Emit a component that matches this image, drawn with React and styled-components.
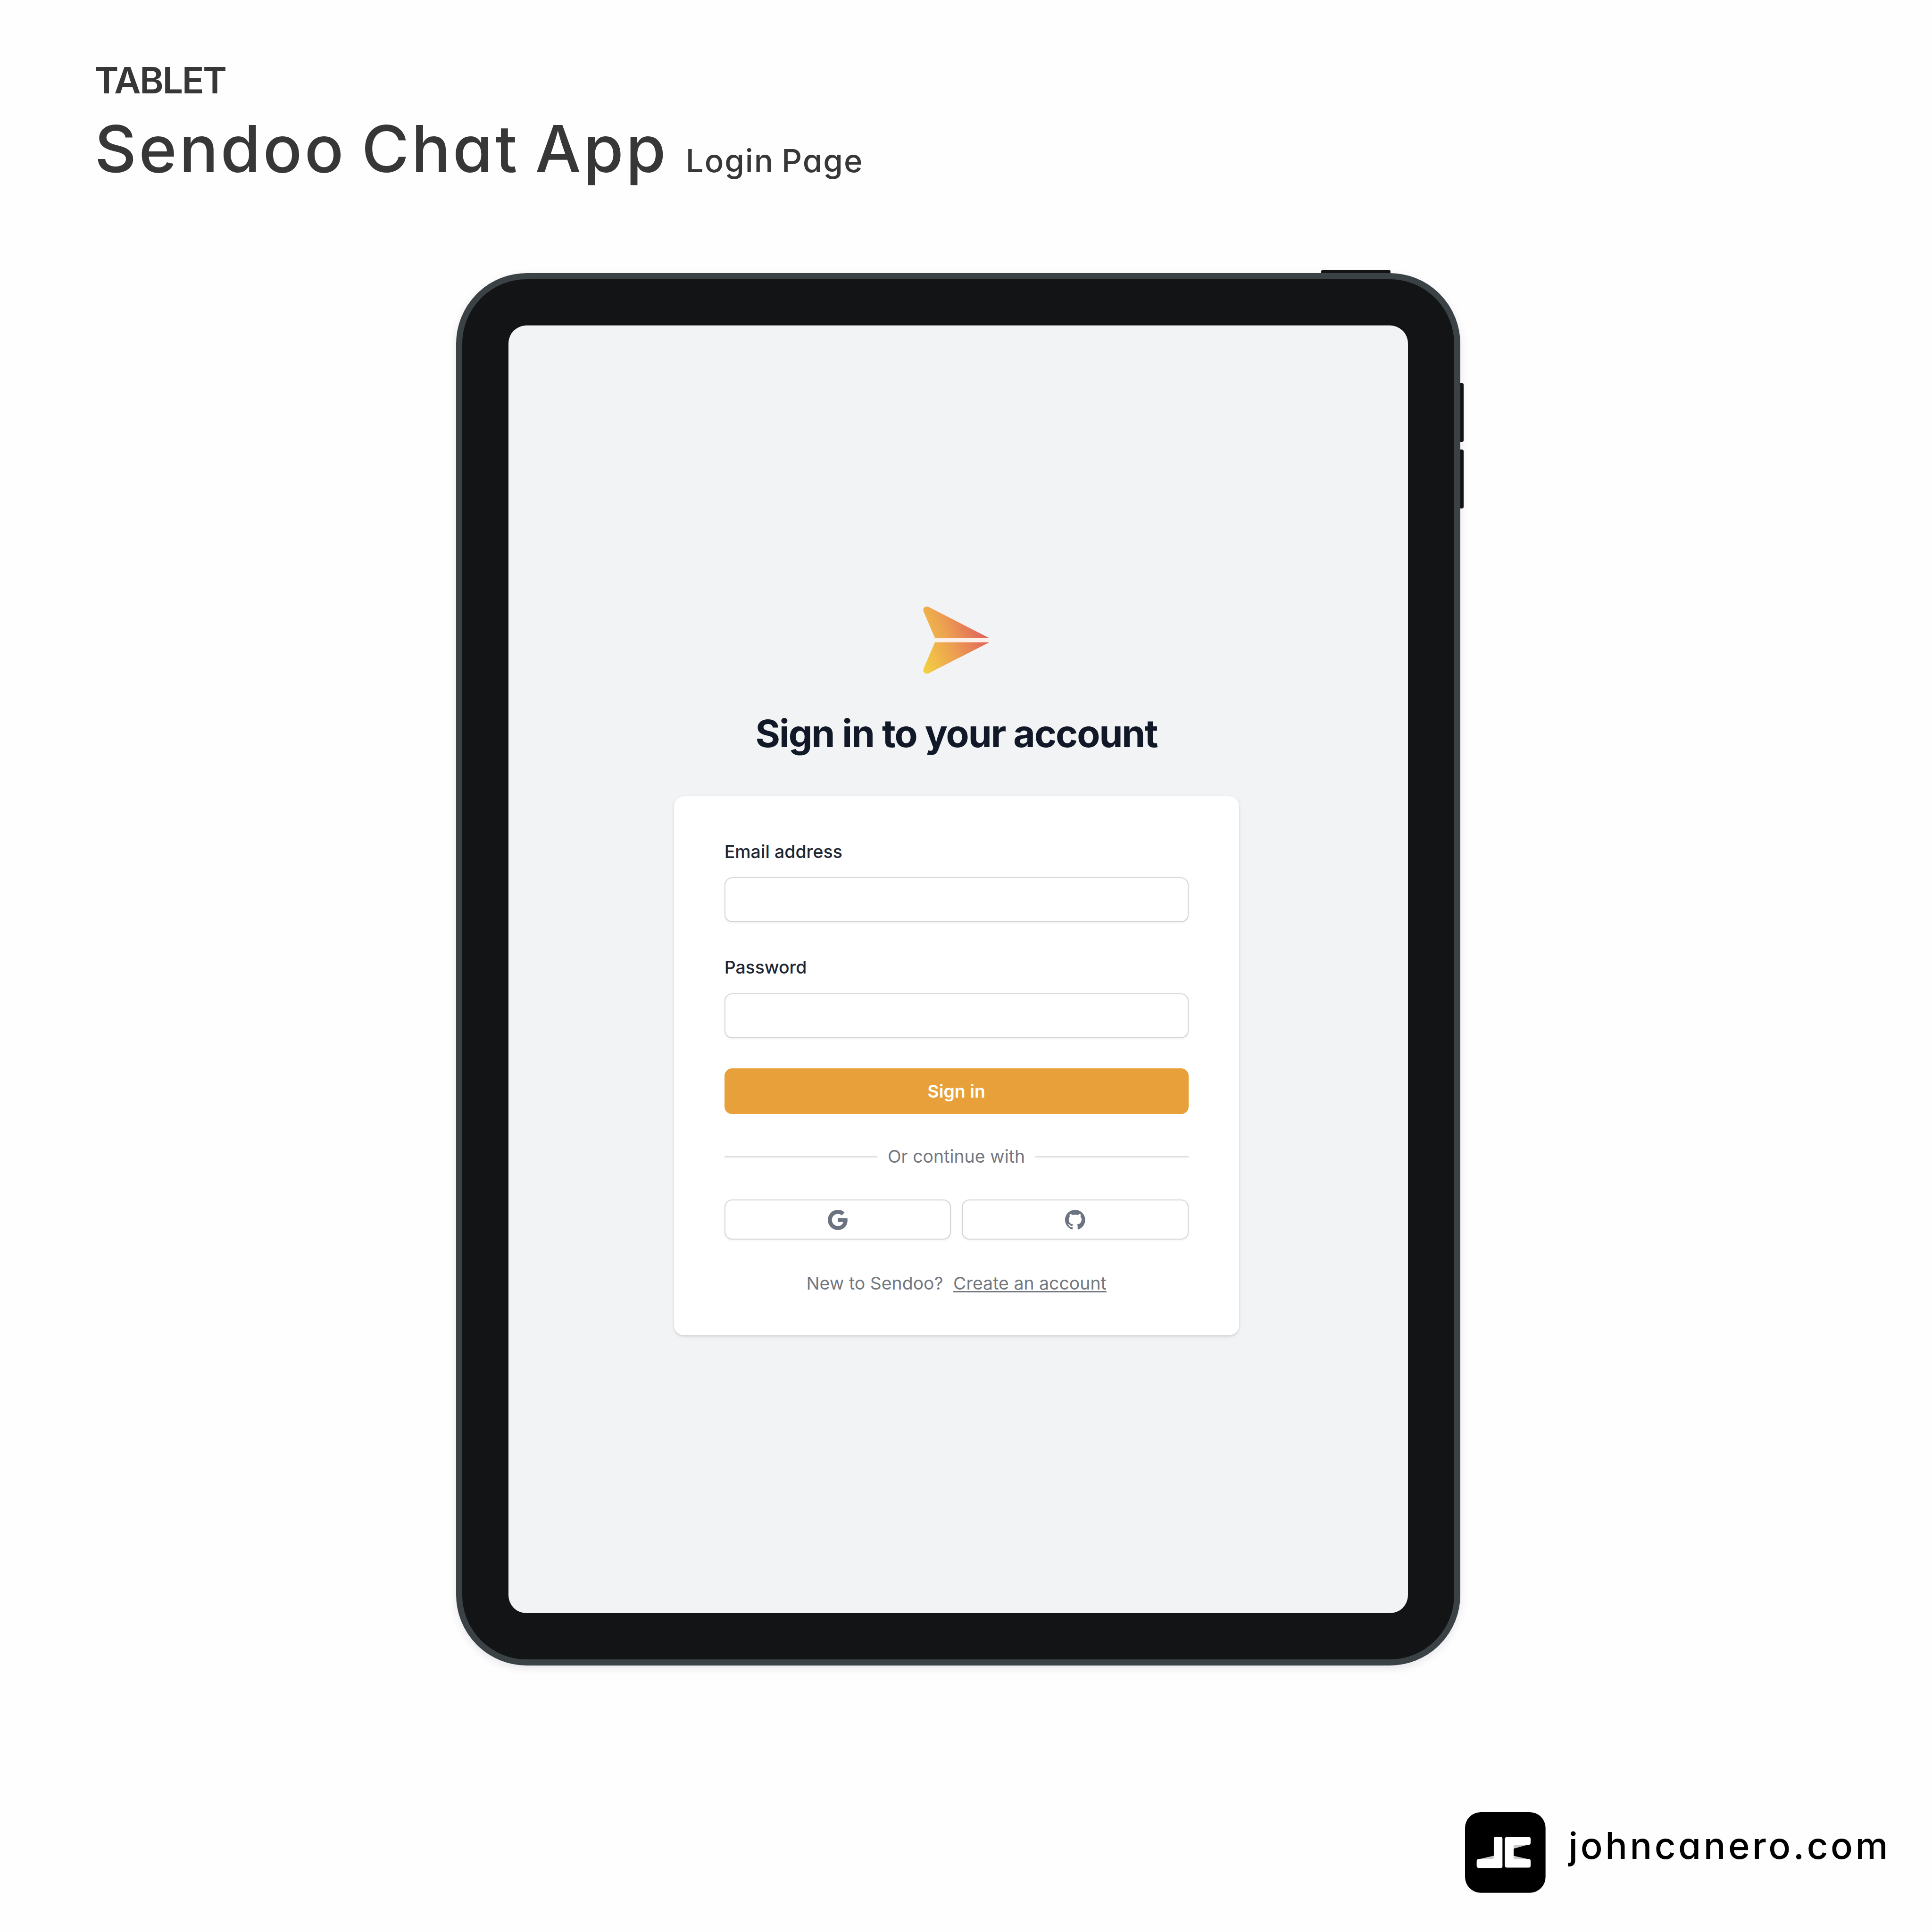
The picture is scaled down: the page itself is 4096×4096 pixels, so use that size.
import React from 'react';
import styled, { createGlobalStyle } from 'styled-components';
import { BsGithub, BsGoogle } from 'react-icons/bs';

// The artboard is designed on a 4320 grid and rendered at 4096.
const u = (n) => `${((n * 4096) / 4320).toFixed(2)}px`;

const GlobalStyle = createGlobalStyle`
  *, *::before, *::after { box-sizing: border-box; }
  html, body { margin: 0; padding: 0; background: #fefefe; }
  body { font-family: Inter, 'Liberation Sans', sans-serif; }
`;

const Artboard = styled.main`
  display: flex;
  flex-direction: column;
  width: ${u(4320)};
  height: ${u(4320)};
  overflow: hidden;
  background: #fefefe;
`;

const Header = styled.header`
  display: flex;
  flex-direction: column;
  gap: ${u(18.8)};
  height: ${u(611)};
  padding: ${u(130)} 0 0 ${u(211.5)};
  color: #373737;
  font-feature-settings: 'cv11';
`;

const Kicker = styled.div`
  font-size: ${u(81.5)};
  font-weight: 600;
  line-height: ${u(100)};
  letter-spacing: ${u(-2.6)};
`;

const TitleRow = styled.div`
  display: flex;
  align-items: baseline;
  gap: ${u(39)};
  white-space: nowrap;
`;

const Title = styled.h1`
  margin: 0;
  font-size: ${u(145)};
  font-weight: 500;
  line-height: ${u(168)};
  letter-spacing: ${u(5.2)};
  word-spacing: ${u(-9)};
`;

const Subtitle = styled.span`
  font-size: ${u(71)};
  font-weight: 500;
  letter-spacing: ${u(2)};
  word-spacing: ${u(-4)};
`;

const Device = styled.section`
  position: relative;
  display: flex;
  flex: none;
  width: ${u(2245)};
  height: ${u(3113)};
  margin-left: ${u(1020)};
  padding: ${u(103.4)};
  border: ${u(14)} solid #3b4245;
  border-radius: ${u(158)};
  background: #121415;
  box-shadow: 0 ${u(6)} ${u(18)} rgba(60, 60, 110, 0.12);
`;

const PowerKey = styled.i`
  position: absolute;
  top: ${u(-21)};
  left: ${u(1920)};
  width: ${u(155)};
  height: ${u(7)};
  border-radius: ${u(4)} ${u(4)} 0 0;
  background: #121415;
`;

const VolumeKey = styled.i`
  position: absolute;
  top: ${(p) => u(p.$top)};
  right: ${u(-21)};
  width: ${u(7)};
  height: ${u(132)};
  border-radius: 0 ${u(4)} ${u(4)} 0;
  background: #121415;
`;

const Screen = styled.div`
  display: flex;
  flex: 1;
  flex-direction: column;
  align-items: center;
  padding: ${u(628)} ${u(8)} 0 0;
  border-radius: ${u(40)};
  background: #f2f3f5;
`;

const BrandMark = styled.svg`
  display: block;
  width: ${u(150)};
  height: ${u(150)};
`;

const Heading = styled.h2`
  margin: ${u(83.5)} 0 ${u(89.5)};
  color: #111827;
  font-size: ${u(84.6)};
  font-weight: 700;
  line-height: ${u(101.5)};
  letter-spacing: -0.025em;
  white-space: nowrap;
`;

const Card = styled.form`
  display: flex;
  flex-direction: column;
  gap: ${u(67.5)};
  width: ${u(1263.6)};
  height: ${u(1205.4)};
  padding: ${u(90)} ${u(113)} 0;
  border-radius: ${u(22.6)};
  background: #fff;
  box-shadow: 0 ${u(2.8)} ${u(8.4)} rgba(0, 0, 0, 0.1),
    0 ${u(2.8)} ${u(5.6)} ${u(-2.8)} rgba(0, 0, 0, 0.1);
  font-size: ${u(39.5)};
`;

const Field = styled.label`
  display: flex;
  flex-direction: column;
  gap: ${u(23.6)};
  color: #1f2733;
  font-weight: 500;
  line-height: ${u(67.7)};
  letter-spacing: ${(p) => u(p.$tracking)};
`;

const Input = styled.input`
  width: 100%;
  height: ${u(100.4)};
  margin: 0;
  padding: 0 ${u(34)};
  border: ${u(2.8)} solid #d3d4d6;
  border-radius: ${u(17)};
  background: #fff;
  box-shadow: 0 ${u(2.8)} ${u(5.6)} rgba(0, 0, 0, 0.04);
  font: inherit;
  outline: none;
`;

const SubmitButton = styled.button`
  width: 100%;
  height: ${u(102.5)};
  padding: 0 0 ${u(1)};
  border: 0;
  border-radius: ${u(17)};
  background: #e8a13a;
  color: #fff;
  font: inherit;
  font-weight: 600;
`;

const Divider = styled.div`
  display: flex;
  align-items: center;
  gap: ${u(23)};
  height: ${u(56)};
  color: #74787f;
  line-height: ${u(56)};
  white-space: nowrap;

  &::before,
  &::after {
    content: '';
    flex: 1;
    height: ${u(2.8)};
    background: #dfe0e2;
  }
`;

const DividerText = styled.span`
  padding-bottom: ${u(2)};
`;

const SocialRow = styled.div`
  display: grid;
  grid-template-columns: 1fr 1fr;
  gap: ${u(24)};
`;

const SocialButton = styled.button`
  display: flex;
  align-items: center;
  justify-content: center;
  height: ${u(89.4)};
  padding: ${u(1)} 0 0;
  border: ${u(2.8)} solid #d3d4d6;
  border-radius: ${u(17)};
  background: #fff;
  box-shadow: 0 ${u(2.8)} ${u(5.6)} rgba(0, 0, 0, 0.04);
  color: #6b7280;
  font-size: ${u(45)};
`;

const SignUp = styled.div`
  display: flex;
  justify-content: center;
  gap: ${u(22.6)};
  color: #74787f;
  line-height: ${u(61)};
  white-space: nowrap;
`;

const SignUpLink = styled.span`
  text-decoration: underline;
  text-decoration-thickness: ${u(3)};
  text-underline-offset: ${u(3)};
  text-decoration-skip-ink: none;
`;

const Footer = styled.footer`
  display: flex;
  gap: ${u(51.5)};
  margin-top: ${u(328)};
  padding-left: ${u(3276)};
`;

const AuthorLogo = styled.svg`
  flex: none;
  width: ${u(180)};
  height: ${u(180)};
`;

const Site = styled.span`
  padding-top: ${u(24)};
  color: #000;
  font-size: ${u(82)};
  font-weight: 500;
  line-height: ${u(102)};
  letter-spacing: ${u(5.8)};
  white-space: nowrap;
  font-feature-settings: 'cv11';
`;

function SendooMark() {
  return (
    <BrandMark viewBox="0 0 150 150" aria-hidden="true">
      <defs>
        <linearGradient id="wing" gradientUnits="userSpaceOnUse" x1="-6" y1="120" x2="144" y2="62">
          <stop offset="0" stopColor="#f3cf42" />
          <stop offset="0.5" stopColor="#ec9e51" />
          <stop offset="1" stopColor="#df5f5c" />
        </linearGradient>
      </defs>
      <path d="M28 70H147V81H28z" fill="#fdf0e9" />
      <path d="M26.5 70.5 1 11C-2 3 6-2.500 13 1L148 70.500z" fill="url(#wing)" />
      <path d="M26.500 79.800 1 139C-2 147 6 152.500 13 149L148 79.800z" fill="url(#wing)" />
    </BrandMark>
  );
}

function AuthorMark() {
  return (
    <AuthorLogo viewBox="0 0 180 180" aria-hidden="true">
      <rect width="180" height="180" rx="35" />
      <path d="M29 105.500 64.500 97.300H70V110H29zM108 72H143.500L108 81.700zM108 97.300 143.500 105.500V110H108z" fill="#c9c9c9" />
      <path
        d="M68.300 55.300H79.700Q83.700 55.300 83.700 59.300V120.700Q83.700 124.700 79.700 124.700H31Q26 124.700 26 119.700V109.700Q26 104.700 31 104.700H60.300Q64.300 104.700 64.300 100.700V59.300Q64.300 55.300 68.300 55.300z"
        fill="#fff"
      />
      <path
        d="M94 55.300H142.200Q146.700 55.300 146.700 59.800V68Q146.700 72 142.500 73.300H112.700Q108.700 73.300 108.700 77.300V100.700Q108.700 104.700 112.700 104.700H142.200Q146.700 104.700 146.700 109.200V119.500Q146.700 124 142.200 124H94Q89 124 89 119V60.300Q89 55.300 94 55.300z"
        fill="#fff"
      />
    </AuthorLogo>
  );
}

export default function App() {
  return (
    <>
      <GlobalStyle />
      <Artboard>
        <Header>
          <Kicker>TABLET</Kicker>
          <TitleRow>
            <Title>Sendoo Chat App</Title>
            <Subtitle>Login Page</Subtitle>
          </TitleRow>
        </Header>

        <Device>
          <PowerKey />
          <VolumeKey $top={231.5} />
          <VolumeKey $top={380.3} />
          <Screen>
            <SendooMark />
            <Heading>Sign in to your account</Heading>
            <Card onSubmit={(e) => e.preventDefault()}>
              <Field $tracking={0.05}>
                Email address
                <Input type="email" />
              </Field>
              <Field $tracking={-0.1}>
                Password
                <Input type="password" />
              </Field>
              <SubmitButton type="submit">Sign in</SubmitButton>
              <Divider>
                <DividerText>Or continue with</DividerText>
              </Divider>
              <SocialRow>
                <SocialButton type="button" aria-label="Google">
                  <BsGoogle />
                </SocialButton>
                <SocialButton type="button" aria-label="GitHub">
                  <BsGithub />
                </SocialButton>
              </SocialRow>
              <SignUp>
                <span>New to Sendoo?</span>
                <SignUpLink>Create an account</SignUpLink>
              </SignUp>
            </Card>
          </Screen>
        </Device>

        <Footer>
          <AuthorMark />
          <Site>johncanero.com</Site>
        </Footer>
      </Artboard>
    </>
  );
}
